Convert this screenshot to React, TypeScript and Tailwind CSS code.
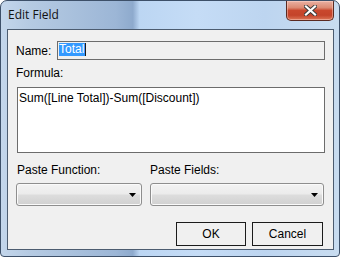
import React from 'react';

function CloseGlyph() {
  return (
    <svg width="13" height="11" viewBox="0 0 13 11">
      <path
        d="M2 1.5 L11 9.5 M11 1.5 L2 9.5"
        stroke="#3b3b3b"
        strokeWidth="4"
        strokeLinecap="square"
        fill="none"
      />
      <path
        d="M2 1.5 L11 9.5 M11 1.5 L2 9.5"
        stroke="#ffffff"
        strokeWidth="2.2"
        strokeLinecap="square"
        fill="none"
      />
    </svg>
  );
}

function ComboBox({ width }: { width: string }) {
  return (
    <div
      className={`${width} h-[23px] rounded-[3px] border border-[#8e8e8e] bg-[linear-gradient(180deg,#f3f3f3_0%,#ebebeb_48%,#dddddd_52%,#d0d0d0_100%)] shadow-[inset_0_0_0_1px_#fafafa] flex items-center justify-end pr-[5px]`}
    >
      <svg width="7" height="4" viewBox="0 0 7 4">
        <path d="M0 0 H7 L3.5 4 Z" fill="#000" />
      </svg>
    </div>
  );
}

export default function App() {
  return (
    <div className="w-[340px] h-[257px] flex flex-col overflow-hidden rounded-t-[7px] rounded-b-[4px] border border-[#3d5069] bg-[linear-gradient(90deg,#c3d6eb_0%,#b6cbe3_8%,#a8c0dc_22%,#9cb6d6_34%,#8eaacd_39%,#bcd6f3_41%,#c5dcf6_58%,#bdd5f0_78%,#c8dcf0_100%)] font-['Liberation_Sans',Arial,sans-serif] text-[12px] text-black">
      {/* title bar */}
      <div className="h-[28px] flex justify-between">
        <span className="pl-[7px] pt-[6px] leading-[16px] font-['Open_Sans',sans-serif] text-[12px] text-[#111]">
          Edit Field
        </span>
        <div className="mr-[5px] w-[48px] h-[20px] rounded-b-[5px] border border-t-0 border-[#5a2a22] bg-[linear-gradient(180deg,#eab1a3_0%,#dc8a73_35%,#c9472d_50%,#c4432a_75%,#dc7557_100%)] shadow-[inset_0_0_0_1px_rgba(255,220,210,0.45)] flex items-center justify-center">
          <CloseGlyph />
        </div>
      </div>

      {/* client area */}
      <div className="ml-[6px] mr-[5px] mb-[6px] flex-1 border border-[#4c5c70] bg-[#f0f0f0] px-[8px] pt-[11px] flex flex-col">
        <div className="flex items-center justify-between h-[19px]">
          <span>Name:</span>
          <div className="w-[268px] h-[19px] border border-[#6c6c6c] bg-[#f0f0f0] pl-[1px] pt-[1px] flex items-start">
            <span className="bg-[#3399ff] text-white leading-[13px] h-[13px] pr-[1px] border-r border-[#1a1a1a]">
              Total
            </span>
          </div>
        </div>

        <div className="mt-[6px] leading-[14px]">Formula:</div>

        <div className="mt-[7px] ml-[1px] h-[66px] border border-[#6c6c6c] bg-white pl-[1px] pt-[3px] leading-[14px]">
          Sum([Line Total])-Sum([Discount])
        </div>

        <div className="mt-[10px] grid grid-cols-[126px_174px] gap-x-[8px]">
          <span className="leading-[14px] pl-[1px]">Paste Function:</span>
          <span className="leading-[14px]">Paste Fields:</span>
          <div className="mt-[6px]">
            <ComboBox width="w-[126px]" />
          </div>
          <div className="mt-[6px]">
            <ComboBox width="w-[174px]" />
          </div>
        </div>

        <div className="mt-[16px] mr-[2px] flex justify-end gap-[6px]">
          <button className="w-[70px] h-[24px] border border-[#1b1b1b] bg-[#f0f0f0] text-[12px]">
            OK
          </button>
          <button className="w-[71px] h-[24px] border border-[#1b1b1b] bg-[#f0f0f0] text-[12px]">
            Cancel
          </button>
        </div>
      </div>
    </div>
  );
}
